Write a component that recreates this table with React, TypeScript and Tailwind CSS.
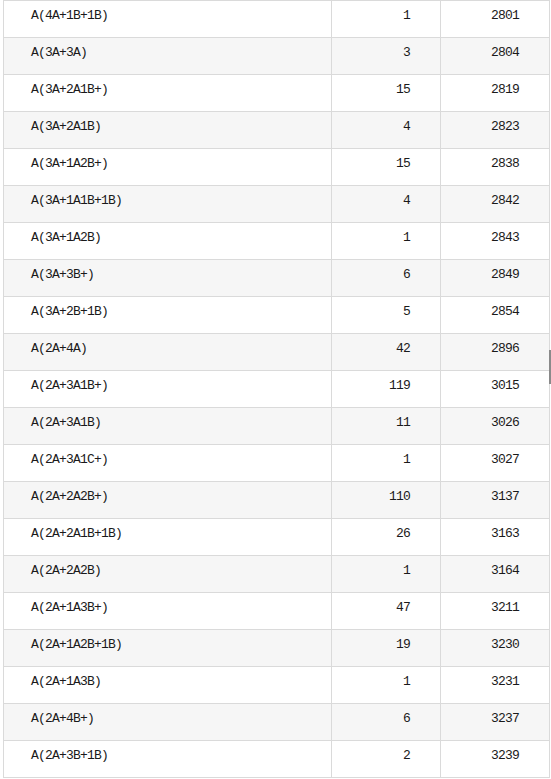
const rows: [string, number, number][] = [
  ["A(4A+1B+1B)", 1, 2801],
  ["A(3A+3A)", 3, 2804],
  ["A(3A+2A1B+)", 15, 2819],
  ["A(3A+2A1B)", 4, 2823],
  ["A(3A+1A2B+)", 15, 2838],
  ["A(3A+1A1B+1B)", 4, 2842],
  ["A(3A+1A2B)", 1, 2843],
  ["A(3A+3B+)", 6, 2849],
  ["A(3A+2B+1B)", 5, 2854],
  ["A(2A+4A)", 42, 2896],
  ["A(2A+3A1B+)", 119, 3015],
  ["A(2A+3A1B)", 11, 3026],
  ["A(2A+3A1C+)", 1, 3027],
  ["A(2A+2A2B+)", 110, 3137],
  ["A(2A+2A1B+1B)", 26, 3163],
  ["A(2A+2A2B)", 1, 3164],
  ["A(2A+1A3B+)", 47, 3211],
  ["A(2A+1A2B+1B)", 19, 3230],
  ["A(2A+1A3B)", 1, 3231],
  ["A(2A+4B+)", 6, 3237],
  ["A(2A+3B+1B)", 2, 3239],
];

export default function App() {
  return (
    <div className="relative w-[551px] h-[779px] overflow-hidden bg-white">
      <div className="ml-[3px] w-[547px] border-x border-b border-[#dadada] font-['Liberation_Mono',monospace] text-[13px] tracking-[-0.8px] text-[#1a1a1a]">
        {rows.map(([name, count, total], i) => (
          <div
            key={name}
            className={`grid h-[37px] grid-cols-[328px_109px_108px] border-t border-[#dadada] ${
              i % 2 === 1 ? "bg-[#f6f6f6]" : "bg-white"
            }`}
          >
            <div className="border-r border-[#dadada] pl-[27px] pt-[6px] leading-[18px]">{name}</div>
            <div className="border-r border-[#dadada] pr-[30px] pt-[6px] text-right leading-[18px]">{count}</div>
            <div className="pr-[30px] pt-[6px] text-right leading-[18px]">{total}</div>
          </div>
        ))}
      </div>
      {/* resize handle left in the capture */}
      <div className="absolute left-[549px] top-[350px] h-[34px] w-[2px] bg-[#8a8a8a]" />
    </div>
  );
}
